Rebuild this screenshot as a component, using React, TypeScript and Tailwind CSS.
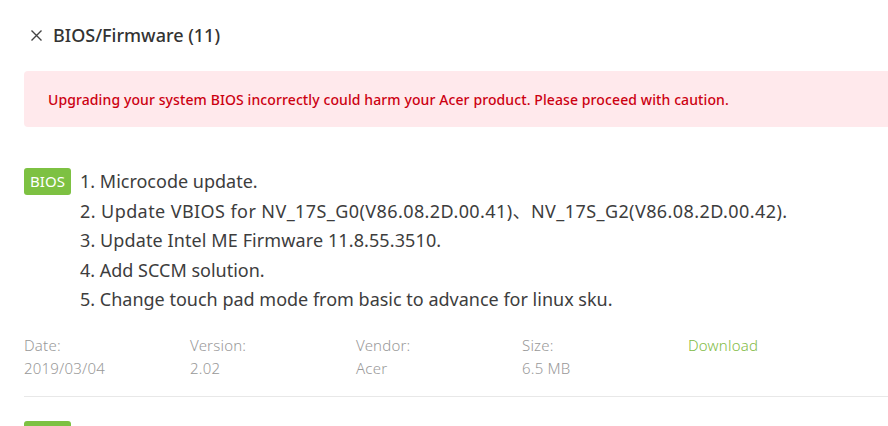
import React from "react";

const items = [
  { t: "1. Microcode update.", c: "" },
  { t: "2. Update VBIOS for NV_17S_G0(V86.08.2D.00.41)、NV_17S_G2(V86.08.2D.00.42).", c: "tracking-[0.42px]" },
  { t: "3. Update Intel ME Firmware 11.8.55.3510.", c: "tracking-[0.1px]" },
  { t: "4. Add SCCM solution.", c: "" },
  { t: "5. Change touch pad mode from basic to advance for linux sku.", c: "" },
];

const meta = [
  { label: "Date:", value: "2019/03/04" },
  { label: "Version:", value: "2.02" },
  { label: "Vendor:", value: "Acer" },
  { label: "Size:", value: "6.5 MB" },
];

export default function App() {
  return (
    <div
      className="w-[888px] h-[426px] overflow-hidden bg-white"
      style={{ fontFamily: '"Noto Sans", "Noto Sans CJK SC", sans-serif' }}
    >
      <div className="pl-[24px] w-[900px]">
        <div className="flex items-center h-[70px] pl-[7px] gap-[11px]">
          <svg width="11" height="11" viewBox="0 0 11 11" className="mt-[1px]">
            <path d="M0.5 0.5 L10.5 10.5 M10.5 0.5 L0.5 10.5" stroke="#444" strokeWidth="1.4" />
          </svg>
          <span className="text-[18px] font-medium text-[#333]">BIOS/Firmware (11)</span>
        </div>
        <div className="mt-[1px] h-[56px] rounded-[4px] bg-[#ffe9ec] flex items-center pl-[24px]">
          <span className="text-[14px] font-medium tracking-[0.1px] text-[#cc0011]">
            Upgrading your system BIOS incorrectly could harm your Acer product. Please proceed with caution.
          </span>
        </div>
        <div className="mt-[41px] flex">
          <div className="w-[47px] h-[27px] rounded-[3px] bg-[#7dc142] text-white text-[15px] flex items-center justify-center">
            BIOS
          </div>
          <div className="ml-[9px] flex flex-col text-[18px] leading-[29.5px] text-[#3d3d3d] -mt-[1px]">
            {items.map((it) => (
              <div key={it.t} className={it.c}>{it.t}</div>
            ))}
          </div>
        </div>
        <div className="mt-[19px] flex text-[15px] font-light tracking-[0.2px] text-[#999]">
          {meta.map((m) => (
            <div key={m.label} className="w-[166px] flex flex-col leading-[23px]">
              <span>{m.label}</span>
              <span>{m.value}</span>
            </div>
          ))}
          <div className="w-[166px] leading-[23px] text-[#82bb45]">Download</div>
        </div>
        <div className="mt-[16px] h-px bg-[#e8e8e8]" />
        <div className="mt-[24px] w-[47px] h-[27px] rounded-[3px] bg-[#7dc142]" />
      </div>
    </div>
  );
}
